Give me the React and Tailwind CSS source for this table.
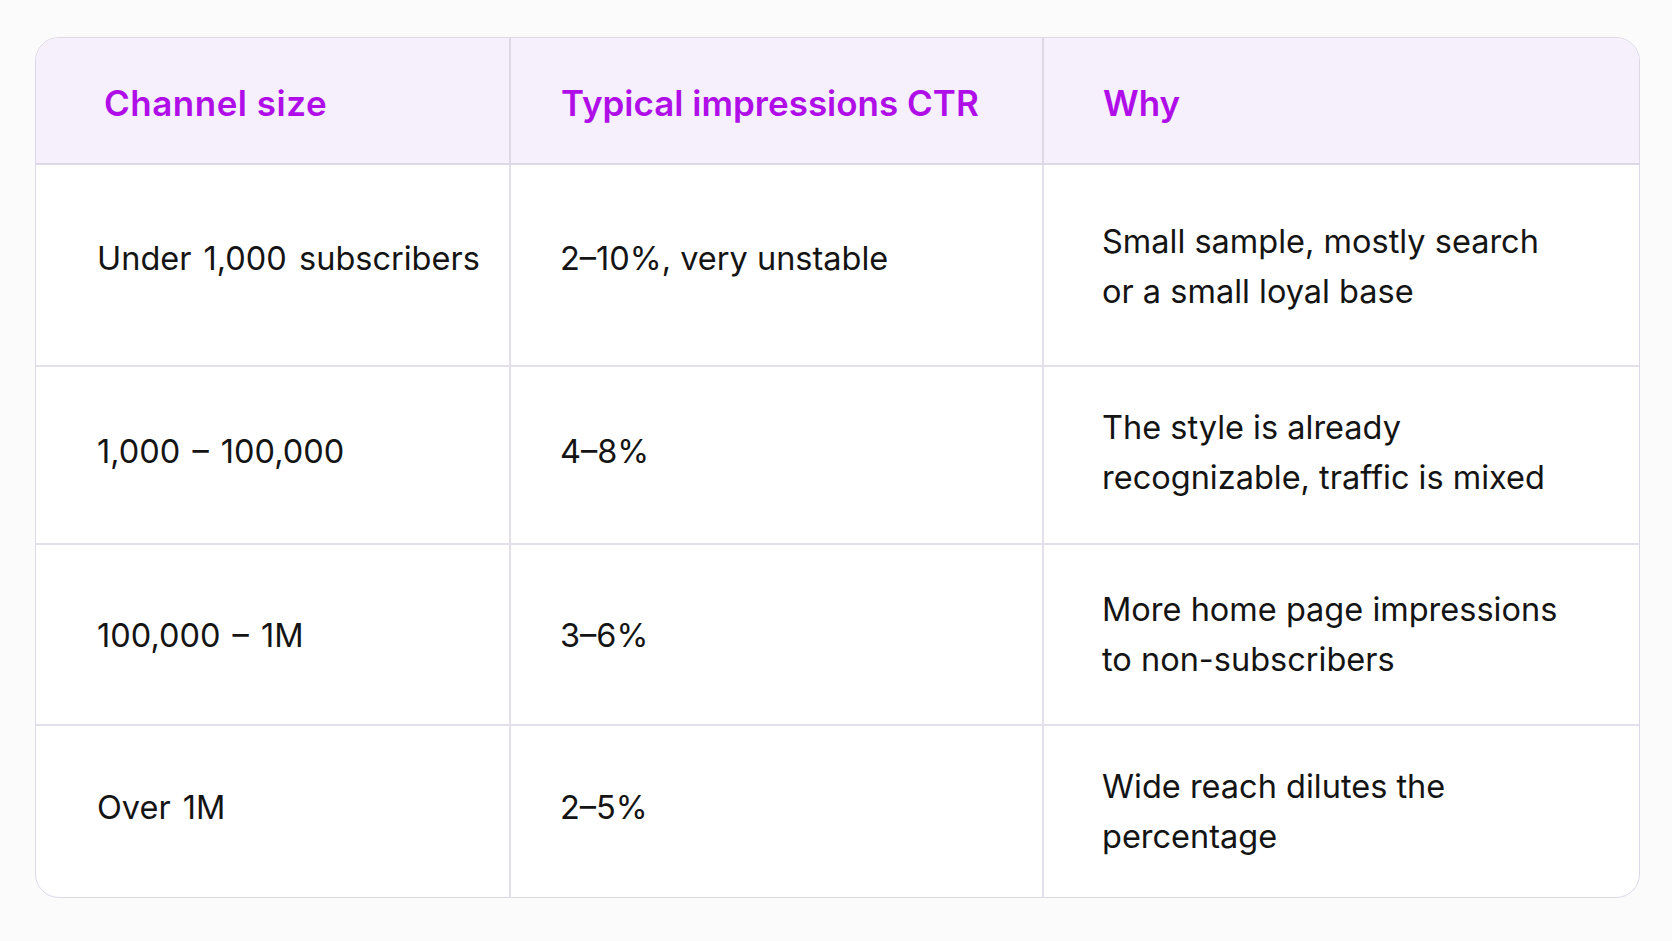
import React from 'react';

const rows = [
  { size: 'Under 1,000 subscribers', ctr: '2–10%, very unstable', why: ['Small sample, mostly search', 'or a small loyal base'], h: 'h-[202px]', nudge: 'pb-[12px]', whyNudge: 'pt-[4px]' },
  { size: '1,000 – 100,000', ctr: '4–8%', why: ['The style is already', 'recognizable, traffic is mixed'], h: 'h-[178px]', nudge: 'pb-[6px]', whyNudge: 'pb-[4px]' },
  { size: '100,000 – 1M', ctr: '3–6%', why: ['More home page impressions', 'to non-subscribers'], h: 'h-[181px]', nudge: 'pt-[2px]', whyNudge: '' },
  { size: 'Over 1M', ctr: '2–5%', why: ['Wide reach dilutes the', 'percentage'], h: 'h-[171px]', nudge: 'pb-[8px]', whyNudge: '' },
];

export default function App() {
  return (
    <div className="w-[1672px] h-[941px] bg-[#fbfbfc] pt-[37px] pl-[35px]" style={{ fontFamily: 'Inter, "Noto Sans", sans-serif' }}>
      <div className="w-[1605px] rounded-[24px] border border-[#dcd8e6] bg-white overflow-hidden">
        {/* header */}
        <div className="flex h-[127px] bg-[#f5f0fb] border-b-2 border-[#dcd8e6] text-[35px] font-semibold text-[#b00ee8]">
          <div className="w-[475px] flex items-center pl-[68px] pt-[6px] border-r-2 border-[#dcd8e6] tracking-[0.5px]">Channel size</div>
          <div className="w-[533px] flex items-center pl-[50px] pt-[6px] border-r-2 border-[#dcd8e6]">Typical impressions CTR</div>
          <div className="flex-1 flex items-center pl-[59px] pt-[6px]">Why</div>
        </div>

        {rows.map((r, i) => (
          <div key={i} className={`flex ${r.h} text-[32.5px] text-[#141414] leading-[50px] ${i < rows.length - 1 ? 'border-b-2 border-[#e3e0ea]' : ''}`}>
            <div className={`w-[475px] flex items-center pl-[61px] ${r.nudge} border-r-2 border-[#e3e0ea] whitespace-nowrap [word-spacing:3px]`}>{r.size}</div>
            <div className={`w-[533px] flex items-center pl-[49px] ${r.nudge} border-r-2 border-[#e3e0ea] whitespace-nowrap`}>{r.ctr}</div>
            <div className={`flex-1 flex flex-col justify-center pl-[58px] ${r.whyNudge} whitespace-nowrap`}>
              {r.why.map((line, j) => (
                <span key={j}>{line}</span>
              ))}
            </div>
          </div>
        ))}
      </div>
    </div>
  );
}
